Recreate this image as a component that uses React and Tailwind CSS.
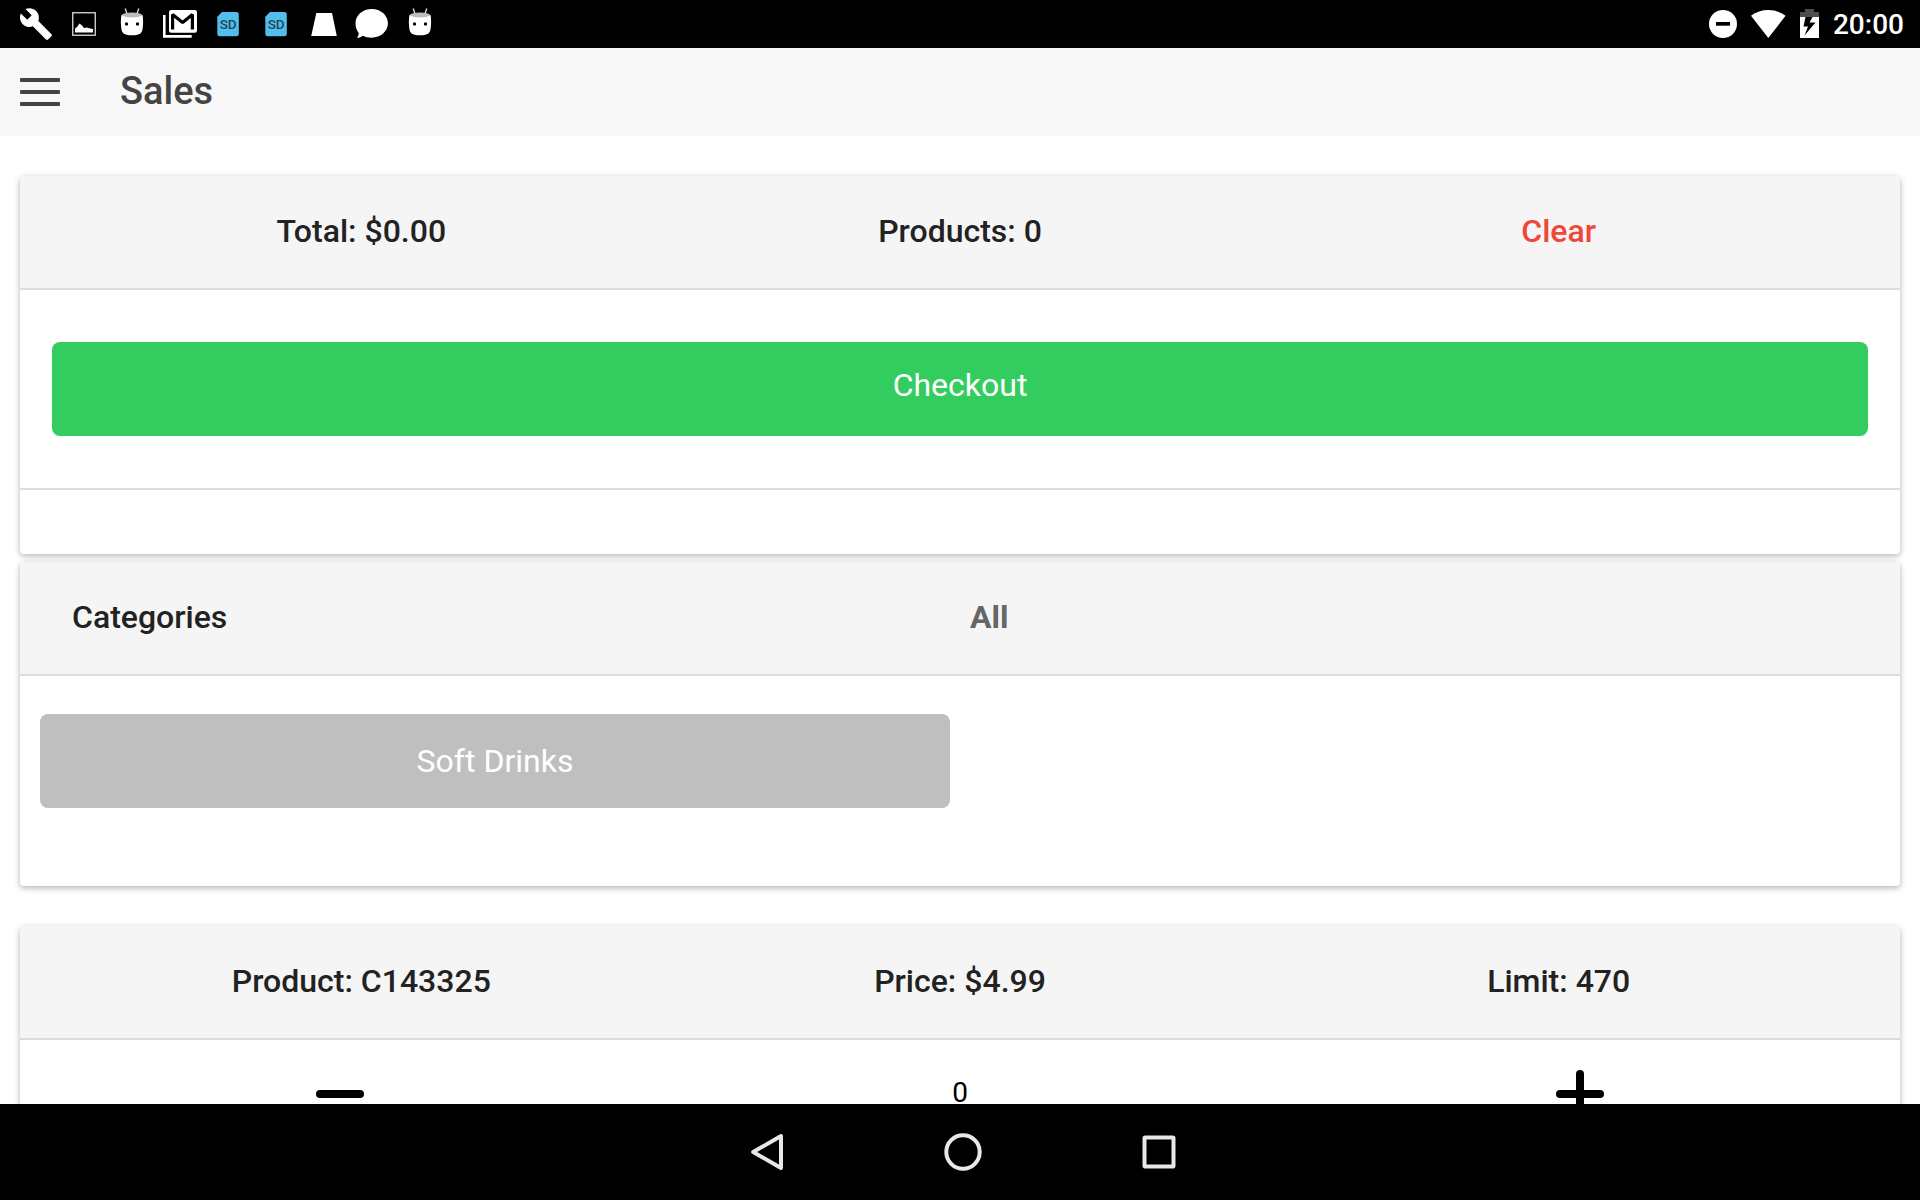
function StatusIcon({ children, ...props }) {
  return (
    <svg className="h-12 w-12 shrink-0" viewBox="0 0 48 48" {...props}>
      {children}
    </svg>
  );
}

function Wrench() {
  return (
    <StatusIcon>
      <path
        transform="translate(6.6 6.6) scale(1.45)"
        fill="#fff"
        d="M22.7 19l-9.1-9.1c.9-2.3.4-5-1.5-6.9-2-2-5-2.4-7.4-1.3L9 6 6 9 1.6 4.7C.4 7.1.9 10.1 2.9 12.1c1.9 1.9 4.6 2.4 6.9 1.5l9.1 9.1c.4.4 1 .4 1.4 0l2.3-2.3c.5-.4.5-1.1.1-1.4z"
      />
    </StatusIcon>
  );
}

function Picture() {
  return (
    <StatusIcon>
      <rect x="12.75" y="12.75" width="22.5" height="22.5" fill="none" stroke="#ddd" strokeWidth="1.3" />
      <path fill="#fff" d="M15 32.5v-4l2-1.5 2.5-3.5 2.5 2 2 2.5 3-.5 3 1 3 .5v3.5z" />
    </StatusIcon>
  );
}

function Robot() {
  return (
    <StatusIcon>
      <path d="M17.2 8.5l2 6M30.8 8.5l-2 6" stroke="#ddd" strokeWidth="1.3" />
      <path
        fill="#fff"
        d="M13.300 15.500c0-2 21.400-2 21.400 0 .7 5 .5 10-.3 14.500-.7 3.500-3.500 5.300-10.400 5.300s-9.700-1.800-10.400-5.300c-.8-4.500-1-9.500-.3-14.500z"
      />
      <ellipse cx="24" cy="15" rx="9.7" ry="2.5" fill="#bbb" />
      <rect x="17" y="22.500" width="3" height="3" rx="0.800" fill="#000" />
      <rect x="28" y="22.500" width="3" height="3" rx="0.800" fill="#000" />
    </StatusIcon>
  );
}

function Mail() {
  return (
    <StatusIcon>
      <path d="M8.300 15v21.400H35.700" fill="none" stroke="#fff" strokeWidth="2.600" />
      <rect x="13" y="10" width="28" height="22.700" rx="2.200" fill="#fff" />
      <path
        d="M16.600 29.400V14.500L26.600 22.500 36.400 14.500V29.400"
        fill="none"
        stroke="#000"
        strokeWidth="3.200"
        strokeLinejoin="bevel"
      />
    </StatusIcon>
  );
}

function SdCard() {
  return (
    <StatusIcon>
      <path
        fill="#53bdeb"
        d="M18 12h14.500a2.300 2.300 0 0 1 2.300 2.300v19.600a2.300 2.300 0 0 1-2.300 2.300H15.600a2.300 2.300 0 0 1-2.300-2.300V16.700z"
      />
      <text
        x="24.200"
        y="29"
        textAnchor="middle"
        fill="#1f4658"
        className="font-['Roboto'] text-[13.5px] font-medium"
      >
        SD
      </text>
    </StatusIcon>
  );
}

function Trapezoid() {
  return (
    <StatusIcon>
      <path fill="#fff" d="M16.300 13h15.700l4.800 23H11.200z" />
    </StatusIcon>
  );
}

function Bubble() {
  return (
    <StatusIcon>
      <path
        fill="#fff"
        d="M23.700 9c9 0 16.200 6.200 16.200 14.300s-7.200 14.400-16.200 14.400c-3.500 0-6.500-.7-9.200-2-1.500 1.500-3.500 2.200-5.500 2.100 1-1 1.700-2.500 1.700-4.700-2-2.700-3.200-6-3.200-9.800C7.500 15.200 14.700 9 23.700 9z"
      />
    </StatusIcon>
  );
}

function StatusBar() {
  return (
    <div className="flex h-12 shrink-0 items-center justify-between bg-black pl-3">
      <div className="flex">
        <Wrench />
        <Picture />
        <Robot />
        <Mail />
        <SdCard />
        <SdCard />
        <Trapezoid />
        <Bubble />
        <Robot />
      </div>
      <div className="flex items-center pr-4">
        <svg className="h-12 w-7" viewBox="0 0 28 48">
          <circle cx="14" cy="24" r="14" fill="#fff" />
          <rect x="7" y="22" width="14" height="3.700" fill="#000" />
        </svg>
        <svg className="ml-[14px] h-12 w-[35px]" viewBox="0 0 35 48">
          <path fill="#fff" d="M17.300 38L0 15.800C5 12 11 10 17.300 10s12.300 2 17.300 5.800z" />
        </svg>
        <svg className="ml-[14px] h-12 w-[19px]" viewBox="0 0 19 48">
          <path fill="#4d4d4d" d="M0 12h5V9h9v3h5v5H0z" />
          <path fill="#fff" d="M0 17h19v21H0z" />
          <path fill="#000" d="M5.500 17h7l-3 5.500h6L4.500 35.500 8 26.500H3.500z" />
        </svg>
        <span className="ml-[14px] pt-[2px] text-[28px] leading-none font-medium text-white">20:00</span>
      </div>
    </div>
  );
}

function AppBar() {
  return (
    <header className="flex h-[88px] shrink-0 items-center bg-[#f8f8f8] pl-5">
      <div className="flex flex-col gap-2">
        <div className="h-1 w-10 rounded-[1px] bg-[#444]" />
        <div className="h-1 w-10 rounded-[1px] bg-[#444]" />
        <div className="h-1 w-10 rounded-[1px] bg-[#444]" />
      </div>
      <h1 className="ml-[60px] pb-[2px] text-[38px] leading-none font-medium text-[#444]">Sales</h1>
    </header>
  );
}

function Card({ className = "", children }) {
  return (
    <section className={"mx-5 rounded-[4px] bg-white shadow-[0_2px_6px_rgba(0,0,0,0.3)] " + className}>
      {children}
    </section>
  );
}

function CardHeader({ children }) {
  return (
    <div className="flex h-[114px] items-center rounded-t-[4px] border-b-2 border-[#ddd] bg-[#f5f5f5] px-[42px] pb-[2px] text-[32px] leading-10 font-medium text-[#222]">
      {children}
    </div>
  );
}

function NavBar() {
  return (
    <nav className="flex h-24 shrink-0 items-center bg-black pl-[669px]">
      <svg className="h-24 w-[196px]" viewBox="0 0 196 96">
        <path d="M84.200 48L112 32v32z" fill="none" stroke="#e8e8e8" strokeWidth="4" strokeLinejoin="round" />
      </svg>
      <svg className="h-24 w-[196px]" viewBox="0 0 196 96">
        <circle cx="98" cy="48" r="16.700" fill="none" stroke="#e8e8e8" strokeWidth="4" />
      </svg>
      <svg className="h-24 w-[196px]" viewBox="0 0 196 96">
        <rect x="83.500" y="33.500" width="29" height="29" rx="0.800" fill="none" stroke="#e8e8e8" strokeWidth="4" />
      </svg>
    </nav>
  );
}

export default function App() {
  return (
    <div className="flex h-[1200px] w-[1920px] flex-col overflow-hidden bg-white font-['Roboto',sans-serif]">
      <StatusBar />
      <AppBar />
      <main className="min-h-0 flex-1 overflow-hidden pt-10">
        <Card>
          <CardHeader>
            <div className="flex-1 text-center">Total: $0.00</div>
            <div className="flex-1 text-center">Products: 0</div>
            <div className="flex-1 text-center text-[#ef473a]">Clear</div>
          </CardHeader>
          <div className="border-b-2 border-[#ddd] px-8 py-[52px]">
            <button className="flex h-[94px] w-full items-center justify-center rounded-lg bg-[#33cd5f] pb-2 text-[32px] text-white">
              Checkout
            </button>
          </div>
          <div className="h-16" />
        </Card>

        <Card className="mt-2">
          <CardHeader>
            <div className="flex-1 px-[10px]">Categories</div>
            <div className="flex-1 px-[10px] font-bold text-[#666]">All</div>
          </CardHeader>
          <div className="h-[210px] px-5 pt-[38px]">
            <button className="flex h-[94px] w-[910px] items-center justify-center rounded-lg bg-[#bfbfbf] text-[32px] text-white">
              Soft Drinks
            </button>
          </div>
        </Card>

        <Card className="mt-10">
          <CardHeader>
            <div className="flex-1 text-center">Product: C143325</div>
            <div className="flex-1 text-center">Price: $4.99</div>
            <div className="flex-1 text-center">Limit: 470</div>
          </CardHeader>
          <div className="flex h-[108px] items-center px-[10px]">
            <div className="flex flex-1 justify-center">
              <svg className="h-12 w-12" viewBox="0 0 48 48">
                <rect y="20" width="48" height="8" rx="4" />
              </svg>
            </div>
            <div className="flex-1 pb-[2px] text-center text-[28px] leading-8 text-black">0</div>
            <div className="flex flex-1 justify-center">
              <svg className="h-12 w-12" viewBox="0 0 48 48">
                <rect y="20" width="48" height="8" rx="4" />
                <rect x="20" width="8" height="48" rx="4" />
              </svg>
            </div>
          </div>
        </Card>
      </main>
      <NavBar />
    </div>
  );
}
